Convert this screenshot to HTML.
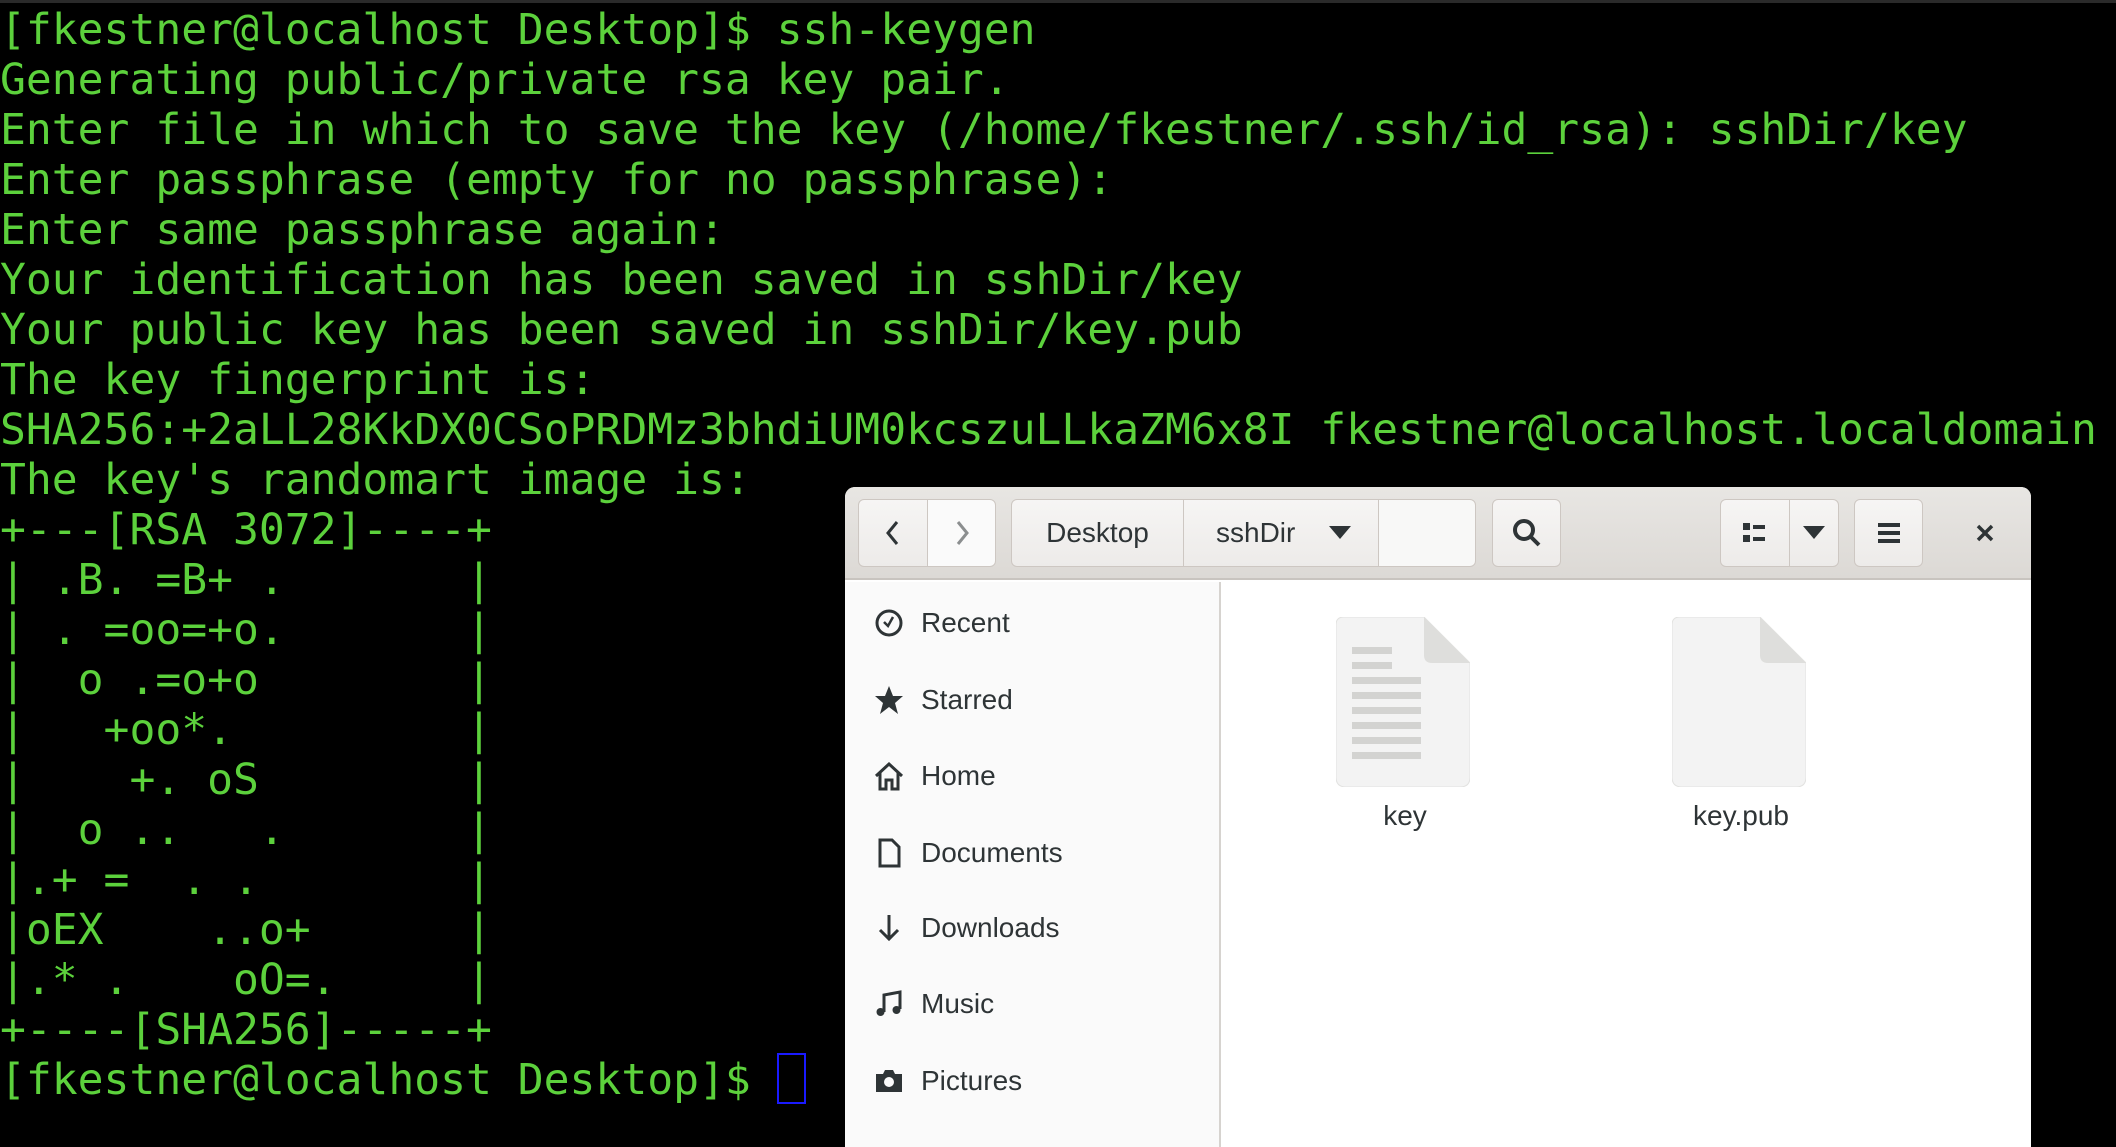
<!DOCTYPE html>
<html><head><meta charset="utf-8"><style>
*{margin:0;padding:0;box-sizing:border-box}
body{width:2116px;height:1142px;background:#000;overflow:hidden;position:relative}
.top{position:absolute;left:0;top:0;width:2116px;height:3px;background:#2a2a2a}
pre{position:absolute;left:0;top:5px;font-family:"DejaVu Sans Mono","Liberation Mono",monospace;font-size:43px;line-height:50px;color:#5cd13c;white-space:pre}
.cur{position:absolute;left:777px;top:1053px;width:29px;height:51px;border:2px solid #1a1aff}
.win{position:absolute;left:845px;top:487px;width:1186px;height:660px;background:#fff;border-radius:10px 10px 0 0;overflow:hidden;font-family:"Liberation Sans",sans-serif;color:#2e3436}
.hdr{position:absolute;left:0;top:0;width:100%;height:93px;background:linear-gradient(#e8e6e3,#dcd9d5);border-bottom:2px solid #c8c4bf}
.b{position:absolute;top:12px;height:68px;background:linear-gradient(#f6f5f4,#edebe9);border:1px solid #cdc7c2;border-radius:6px;display:flex;align-items:center;justify-content:center;font-size:28px;color:#2e3436}
.side{position:absolute;left:0;top:95px;width:376px;height:570px;background:#fafafa;border-right:2px solid #d6d3cf}
.it{position:absolute;left:28px;font-size:28px;display:flex;align-items:center;height:40px}
.it svg{width:32px;height:32px;margin-right:16px}
.lbl{position:absolute;font-size:28px;transform:translateX(-50%)}
</style></head><body>
<div class="top"></div>
<pre>[fkestner@localhost Desktop]$ ssh-keygen
Generating public/private rsa key pair.
Enter file in which to save the key (/home/fkestner/.ssh/id_rsa): sshDir/key
Enter passphrase (empty for no passphrase):
Enter same passphrase again:
Your identification has been saved in sshDir/key
Your public key has been saved in sshDir/key.pub
The key fingerprint is:
SHA256:+2aLL28KkDX0CSoPRDMz3bhdiUM0kcszuLLkaZM6x8I fkestner@localhost.localdomain
The key's randomart image is:
+---[RSA 3072]----+
| .B. =B+ .       |
| . =oo=+o.       |
|  o .=o+o        |
|   +oo*.         |
|    +. oS        |
|  o ..   .       |
|.+ =  . .        |
|oEX    ..o+      |
|.* .    oO=.     |
+----[SHA256]-----+
[fkestner@localhost Desktop]$ </pre>
<div class="cur"></div>
<div class="win">
 <div class="hdr">
  <div class="b" style="left:13px;width:70px;border-radius:6px 0 0 6px"><svg width="24" height="30" viewBox="0 0 24 30"><path d="M16 4 L7 15 L16 26" stroke="#2e3436" stroke-width="3" fill="none"/></svg></div>
  <div class="b" style="left:82px;width:69px;border-radius:0 6px 6px 0;background:#fafafa"><svg width="24" height="30" viewBox="0 0 24 30"><path d="M8 4 L17 15 L8 26" stroke="#8b8e8f" stroke-width="3" fill="none"/></svg></div>
  <div class="b" style="left:166px;width:173px;border-radius:6px 0 0 6px">Desktop</div>
  <div class="b" style="left:338px;width:196px;border-radius:0;justify-content:flex-start;padding-left:32px">sshDir<svg style="margin-left:34px" width="22" height="14" viewBox="0 0 22 14"><path d="M0 0 H22 L11 13Z" fill="#2e3436"/></svg></div>
  <div class="b" style="left:533px;width:98px;border-radius:0 6px 6px 0;background:#f8f8f7"></div>
  <div class="b" style="left:647px;width:69px"><svg width="32" height="32" viewBox="0 0 32 32"><circle cx="13" cy="13" r="9" stroke="#2e3436" stroke-width="4" fill="none"/><path d="M19 19 L28 28" stroke="#2e3436" stroke-width="4"/></svg></div>
  <div class="b" style="left:875px;width:70px;border-radius:6px 0 0 6px"><svg width="24" height="22" viewBox="0 0 24 22"><rect x="0" y="1" width="7" height="7" fill="#2e3436"/><rect x="0" y="13" width="7" height="7" fill="#2e3436"/><rect x="10" y="3" width="12" height="4" fill="#2e3436"/><rect x="10" y="15" width="12" height="4" fill="#2e3436"/></svg></div>
  <div class="b" style="left:944px;width:50px;border-radius:0 6px 6px 0"><svg width="22" height="14" viewBox="0 0 22 14"><path d="M0 0 H22 L11 13Z" fill="#2e3436"/></svg></div>
  <div class="b" style="left:1009px;width:69px"><svg width="22" height="22" viewBox="0 0 22 22"><rect y="1" width="22" height="4" fill="#2e3436"/><rect y="9" width="22" height="4" fill="#2e3436"/><rect y="17" width="22" height="4" fill="#2e3436"/></svg></div>
  <svg style="position:absolute;left:1130px;top:36px" width="20" height="20" viewBox="0 0 20 20"><path d="M3 3 L17 17 M17 3 L3 17" stroke="#2e3436" stroke-width="3.5"/></svg>
 </div>
 <div class="side">
  <div class="it" style="top:21px"><svg viewBox="0 0 32 32"><circle cx="16" cy="16" r="12" stroke="#2e3436" stroke-width="3" fill="none"/><path d="M11 15 L15 19 L20 10" stroke="#2e3436" stroke-width="2.5" fill="none"/></svg>Recent</div>
  <div class="it" style="top:98px"><svg viewBox="0 0 32 32"><path d="M16 2 L20 12 L30 12 L22 19 L25 30 L16 23 L7 30 L10 19 L2 12 L12 12Z" fill="#2e3436"/></svg>Starred</div>
  <div class="it" style="top:174px"><svg viewBox="0 0 32 32"><path d="M3 16 L16 4 L29 16 M7 13 V29 H13 V20 H19 V29 H25 V13" stroke="#2e3436" stroke-width="3" fill="none"/></svg>Home</div>
  <div class="it" style="top:251px"><svg viewBox="0 0 32 32"><path d="M7 3 H19 L26 10 V29 H7Z" stroke="#2e3436" stroke-width="3" fill="none"/></svg>Documents</div>
  <div class="it" style="top:326px"><svg viewBox="0 0 32 32"><path d="M16 3 V27 M7 18 L16 27 L25 18" stroke="#2e3436" stroke-width="3" fill="none"/></svg>Downloads</div>
  <div class="it" style="top:402px"><svg viewBox="0 0 32 32"><path d="M11 24 V7 L27 4 V21" stroke="#2e3436" stroke-width="3" fill="none"/><circle cx="7.5" cy="24" r="4" fill="#2e3436"/><circle cx="23.5" cy="22" r="4" fill="#2e3436"/></svg>Music</div>
  <div class="it" style="top:479px"><svg viewBox="0 0 32 32"><path d="M3 9 H10 L12 5 H20 L22 9 H29 V27 H3Z" fill="#2e3436"/><circle cx="16" cy="17" r="5" fill="#fafafa"/></svg>Pictures</div>
 </div>
 <svg style="position:absolute;left:491px;top:130px" width="134" height="170" viewBox="0 0 134 170"><path d="M8 0 H88 L134 46 V160 Q134 170 124 170 H10 Q0 170 0 160 V8 Q0 0 8 0Z" fill="#f3f3f3" stroke="#e2e2e0"/><path d="M88 0 V38 Q88 46 96 46 H134Z" fill="#dededc"/><g fill="#d3d3d1"><rect x="16" y="30" width="40" height="7"/><rect x="16" y="45" width="40" height="7"/><rect x="16" y="60" width="69" height="7"/><rect x="16" y="75" width="69" height="7"/><rect x="16" y="90" width="69" height="7"/><rect x="16" y="105" width="69" height="7"/><rect x="16" y="120" width="69" height="7"/><rect x="16" y="135" width="69" height="7"/></g></svg>
 <svg style="position:absolute;left:827px;top:130px" width="134" height="170" viewBox="0 0 134 170"><path d="M8 0 H88 L134 46 V160 Q134 170 124 170 H10 Q0 170 0 160 V8 Q0 0 8 0Z" fill="#f3f3f3" stroke="#e2e2e0"/><path d="M88 0 V38 Q88 46 96 46 H134Z" fill="#dededc"/></svg>
 <div class="lbl" style="left:560px;top:313px">key</div>
 <div class="lbl" style="left:896px;top:313px">key.pub</div>
</div>
</body></html>
